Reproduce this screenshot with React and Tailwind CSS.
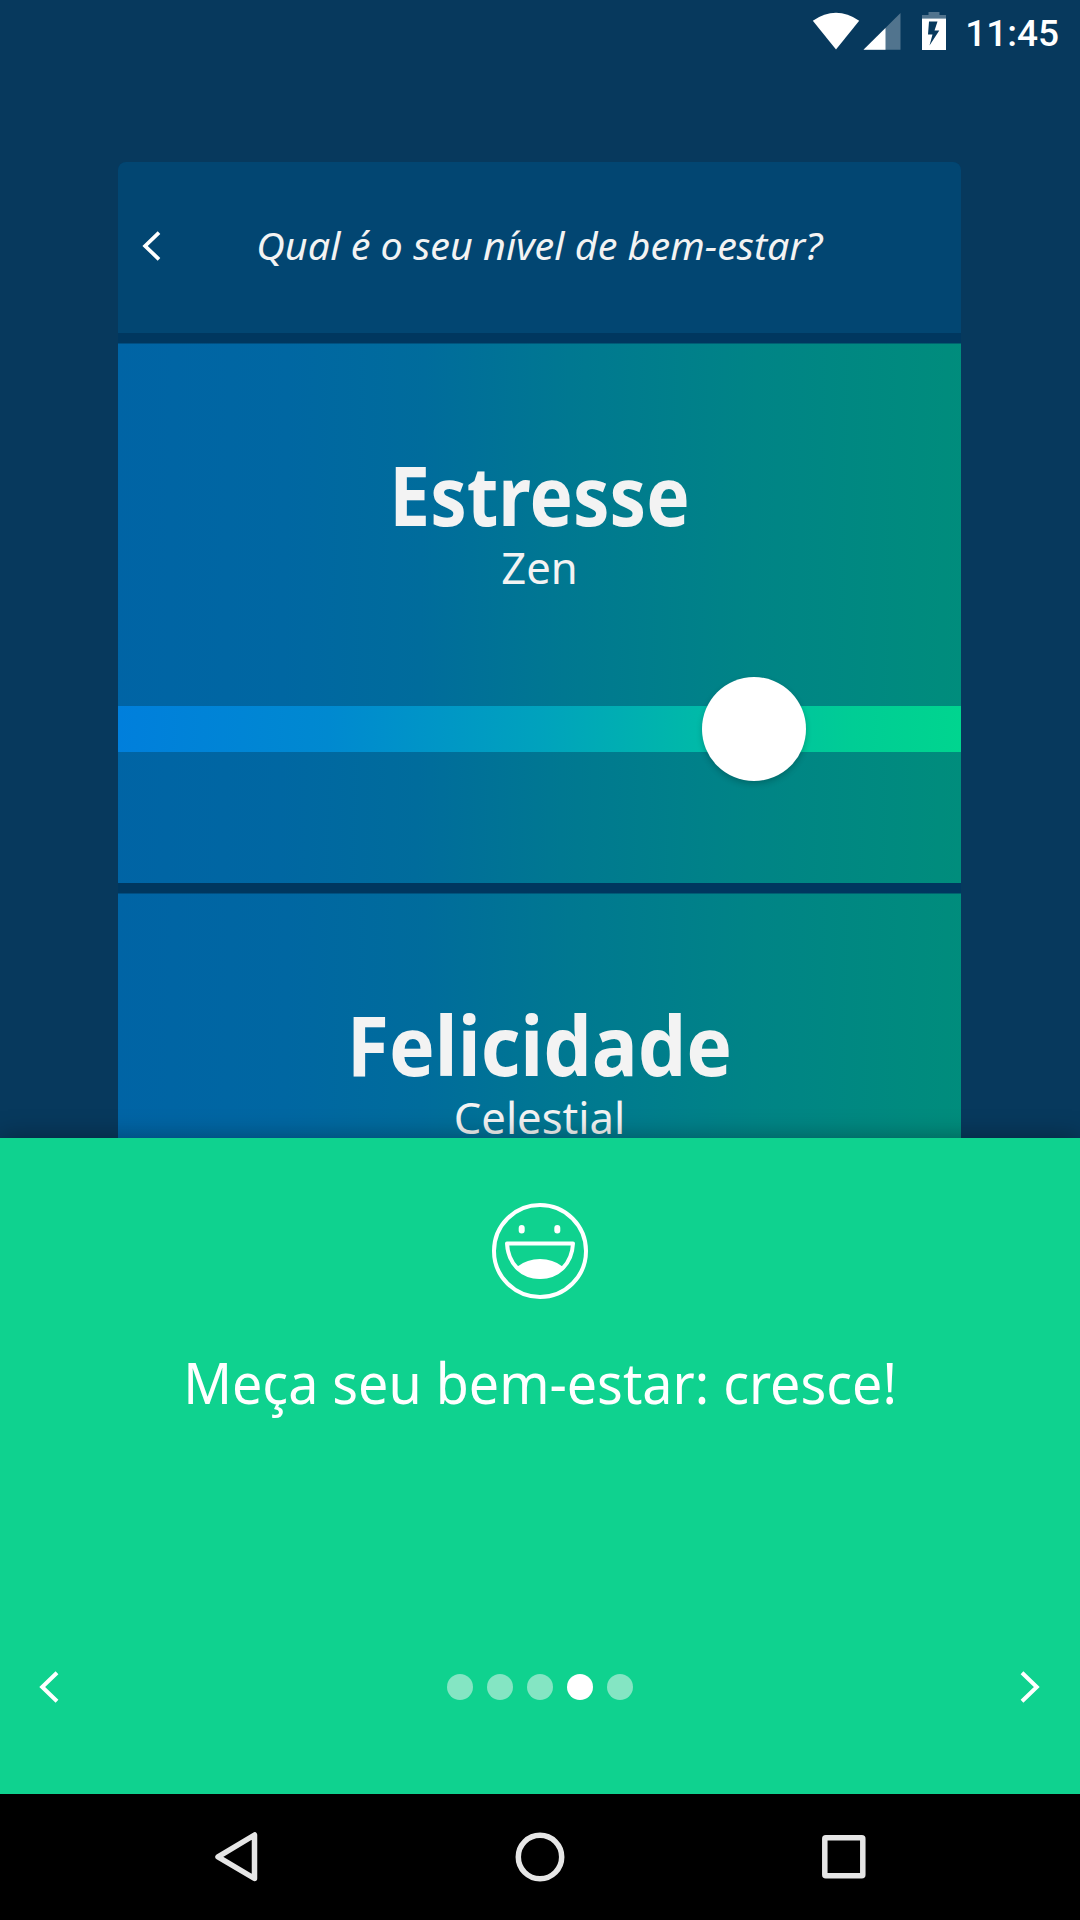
import React, { useState } from "react";

function StatusBar() {
  return (
    <div className="flex h-[52px] justify-end text-white">
      <svg className="h-[52px] w-[140px]" viewBox="810 0 140 52" fill="currentColor">
        <path d="M812.8 20.7 Q836 4.8 859.2 20.7 L836 49.5 Z" />
        <path d="M900.5 13 V49.8 H863.5 Z" opacity="0.3" />
        <path d="M885.5 27.9 V49.8 H863.5 Z" />
        <path d="M922 18.5 V15 H928.5 V12 H939.5 V15 H946 V18.5 Z" opacity="0.3" />
        <path
          fillRule="evenodd"
          d="M922 18.5 H946 V50 H922 Z M929 21.5 L928 34.5 H932.5 L929.5 45.5 L939.3 30.5 H934.5 L937.5 21.5 Z"
        />
      </svg>
      <span className="mr-[21px] ml-[15px] pt-3 font-['Roboto',sans-serif] text-[37px] leading-[44px] font-medium">
        11:45
      </span>
    </div>
  );
}

function Chevron({ className, flip }) {
  return (
    <svg
      className={className}
      viewBox="0 0 20 32"
      fill="none"
      stroke="currentColor"
      strokeWidth="4"
    >
      <path d={flip ? "M2 1.8 L16.8 16 L2 30.2" : "M18 1.8 L3.2 16 L18 30.2"} />
    </svg>
  );
}

function MoodCard({ title, titleScale, value, children }) {
  return (
    <div className="h-[540px] shrink-0 border-t border-[#00375f]/50 bg-[linear-gradient(91deg,#0064a5_0%,#0067a2_20%,#006c9c_36%,#007891_53%,#008486_75%,#008d7c_100%)] pt-[108px] text-center text-[#f3f3f3]">
      <h2 className={`origin-center text-[83px] leading-[84px] font-bold ${titleScale}`}>
        {title}
      </h2>
      <p className="mt-[11px] origin-center scale-x-[0.99] text-[44px] leading-[40px]">
        {value}
      </p>
      {children}
    </div>
  );
}

function Slider({ position }) {
  return (
    <div className="relative mt-[119px] h-[46px] bg-[linear-gradient(92deg,#007fdc_0%,#0089d0_25%,#00a2bd_50%,#00bba7_70%,#00cd95_87%,#00d58f_100%)]">
      <div
        className="absolute -top-[29px] h-[104px] w-[104px] -translate-x-1/2 rounded-full bg-white shadow-[0_3px_6px_rgba(0,0,0,0.2)]"
        style={{ left: `${position}%` }}
      />
    </div>
  );
}

function Smiley() {
  return (
    <svg className="h-24 w-24" viewBox="0 0 96 96" fill="none" stroke="white" strokeWidth="4">
      <circle cx="48" cy="48" r="46" />
      <path d="M15 40.5 H81 C80 60 67 74 48 74 S16 60 15 40.5 Z" strokeLinejoin="round" />
      <path
        d="M25.5 63.5 Q35 56 48 56 T70.5 63.5 Q62 75.5 48 75.5 T25.5 63.5 Z"
        fill="white"
        stroke="none"
      />
      <rect x="26.7" y="22" width="6" height="8.6" rx="3" fill="white" stroke="none" />
      <rect x="62.3" y="22" width="6" height="8.6" rx="3" fill="white" stroke="none" />
    </svg>
  );
}

function NavBar() {
  return (
    <div className="h-[126px] shrink-0 bg-black">
      <svg
        className="h-[126px] w-[1080px]"
        viewBox="0 0 1080 126"
        fill="none"
        stroke="#e6e6e6"
        strokeWidth="5.5"
        strokeLinejoin="round"
      >
        <path d="M254.5 41 V84.5 L218 62.8 Z" />
        <circle cx="540" cy="63" r="21.7" />
        <rect x="824.8" y="43.8" width="38" height="38" rx="1" />
      </svg>
    </div>
  );
}

export default function App() {
  const [page, setPage] = useState(3);

  return (
    <div className="flex h-[1920px] w-[1080px] flex-col overflow-hidden bg-[#07395d] font-['Noto_Sans',sans-serif]">
      <div className="h-[1138px] shrink-0 overflow-hidden">
        <StatusBar />
        <div className="mt-[110px] ml-[118px] flex w-[843px] flex-col gap-[10px] overflow-hidden rounded-t-lg bg-[#00375f]">
          <div className="flex h-[171px] shrink-0 items-center bg-[#024672] pb-[3px] text-white">
            <Chevron className="ml-6 h-[30px] w-[19px]" />
            <h1 className="-ml-[44px] flex-1 pb-0.5 text-center text-[39px] whitespace-nowrap text-[#f3f3f3] italic">
              <span className="inline-block scale-x-[1.013]">
                Qual é o seu nível de bem-estar?
              </span>
            </h1>
          </div>
          <MoodCard title="Estresse" titleScale="scale-x-[0.878]" value="Zen">
            <Slider position={75.4} />
          </MoodCard>
          <MoodCard title="Felicidade" titleScale="scale-x-[0.925]" value="Celestial" />
        </div>
      </div>

      <div className="z-10 flex h-[656px] shrink-0 flex-col items-center bg-[#0fd28f] pt-[65px] text-white shadow-[0_0_24px_rgba(0,0,0,0.35)]">
        <Smiley />
        <p className="mt-[43px] scale-x-[0.944] text-[57px] leading-[80px] whitespace-nowrap">
          Meça seu bem-estar: cresce!
        </p>
        <div className="mt-[247px] flex h-9 w-full items-center justify-between pr-10 pl-[39px]">
          <button onClick={() => setPage(Math.max(0, page - 1))}>
            <Chevron className="h-8 w-5" />
          </button>
          <div className="flex gap-[14px]">
            {[0, 1, 2, 3, 4].map((i) => (
              <span
                key={i}
                className={`h-[26px] w-[26px] rounded-full ${
                  i === page ? "bg-white" : "bg-[#84e5c3]"
                }`}
              />
            ))}
          </div>
          <button onClick={() => setPage(Math.min(4, page + 1))}>
            <Chevron className="h-8 w-5" flip />
          </button>
        </div>
      </div>
      <NavBar />
    </div>
  );
}
